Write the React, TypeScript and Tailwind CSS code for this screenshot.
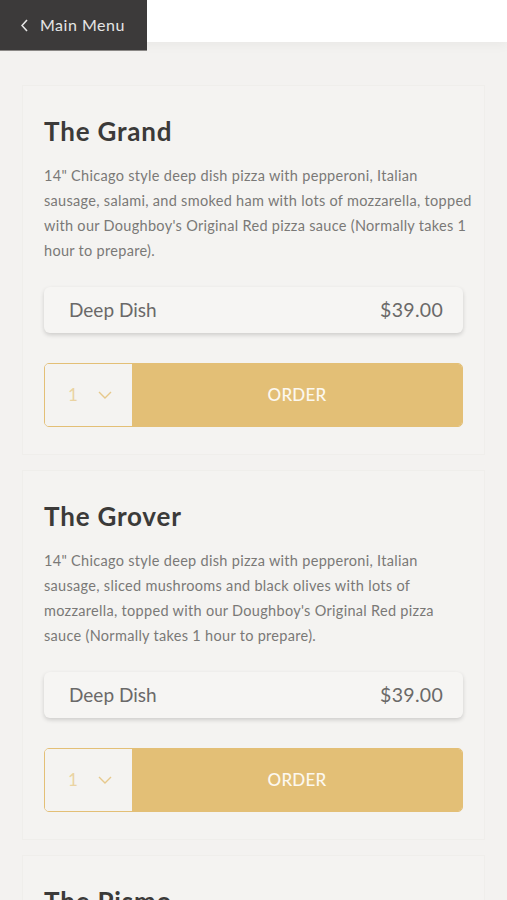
import React from "react";

type Item = { name: string; lines: string[]; size: string; price: string };

const items: Item[] = [
  {
    name: "The Grand",
    lines: [
      "14\" Chicago style deep dish pizza with pepperoni, Italian",
      "sausage, salami, and smoked ham with lots of mozzarella, topped",
      "with our Doughboy's Original Red pizza sauce (Normally takes 1",
      "hour to prepare).",
    ],
    size: "Deep Dish",
    price: "$39.00",
  },
  {
    name: "The Grover",
    lines: [
      "14\" Chicago style deep dish pizza with pepperoni, Italian",
      "sausage, sliced mushrooms and black olives with lots of",
      "mozzarella, topped with our Doughboy's Original Red pizza",
      "sauce (Normally takes 1 hour to prepare).",
    ],
    size: "Deep Dish",
    price: "$39.00",
  },
  {
    name: "The Pismo",
    lines: [
      "14\" Chicago style deep dish pizza with pepperoni, Italian",
      "sausage, salami, and smoked ham with lots of mozzarella,",
      "topped with our Doughboy's Original Red pizza sauce.",
    ],
    size: "Deep Dish",
    price: "$39.00",
  },
];

function Card({ item }: { item: Item }) {
  return (
    <div className="border border-[#efeeeb] bg-[#f4f3f1] px-[21px] pt-[29px] pb-[27px]">
      <h2 className="text-[26px] leading-[32px] font-bold text-[#3b3a39] tracking-[0.8px]">{item.name}</h2>
      <p className="mt-[16px] text-[14.5px] leading-[25px] text-[#7a7977] tracking-[0.3px]">
        {item.lines.map((l, i) => (
          <span key={i} className="block whitespace-nowrap">
            {l}
          </span>
        ))}
      </p>
      <div className="mt-[24px] h-[46px] rounded-[6px] bg-[#f6f5f3] shadow-[0_2px_4px_rgba(0,0,0,0.16)] flex items-center justify-between pl-[25px] pr-[20px]">
        <span className="text-[19px] text-[#6a6968]">{item.size}</span>
        <span className="text-[19.5px] text-[#6a6968] tracking-[0.3px]">{item.price}</span>
      </div>
      <div className="mt-[30px] h-[64px] flex rounded-[5px] overflow-hidden border border-[#e3bf76]">
        <div className="w-[87px] bg-[#f4f3f1] flex items-center pl-[23px] gap-[20px]">
          <span className="text-[17px] text-[#ead3a2]">1</span>
          <svg width="14" height="8" viewBox="0 0 14 8" fill="none">
            <polyline points="1,1 7,7 13,1" stroke="#e6c98c" strokeWidth="1.4" />
          </svg>
        </div>
        <div className="flex-1 bg-[#e3bf76] flex items-center justify-center">
          <span className="text-[17px] font-medium text-[#fcf8ef] tracking-[0.2px]">ORDER</span>
        </div>
      </div>
    </div>
  );
}

export default function App() {
  return (
    <div className="h-[900px] overflow-hidden bg-[#f3f2f0]" style={{ fontFamily: "Lato, 'Open Sans', sans-serif" }}>
      <div className="relative h-[42px] bg-white shadow-[0_4px_10px_rgba(0,0,0,0.04)]">
        <div className="absolute left-0 top-0 w-[147px] h-[51px] bg-[#3c3a3a] border-b border-[#8a8886] flex items-center pl-[21px] gap-[12px]">
          <svg width="7" height="13" viewBox="0 0 7 13" fill="none">
            <polyline points="6,1 1,6.5 6,12" stroke="#e6e6e6" strokeWidth="1.6" />
          </svg>
          <span className="text-[16px] text-[#e6e6e6] tracking-[0.5px]">Main Menu</span>
        </div>
      </div>
      <div className="px-[22px] pt-[43px] flex flex-col gap-[15px]">
        {items.map((it) => (
          <Card key={it.name} item={it} />
        ))}
      </div>
    </div>
  );
}
